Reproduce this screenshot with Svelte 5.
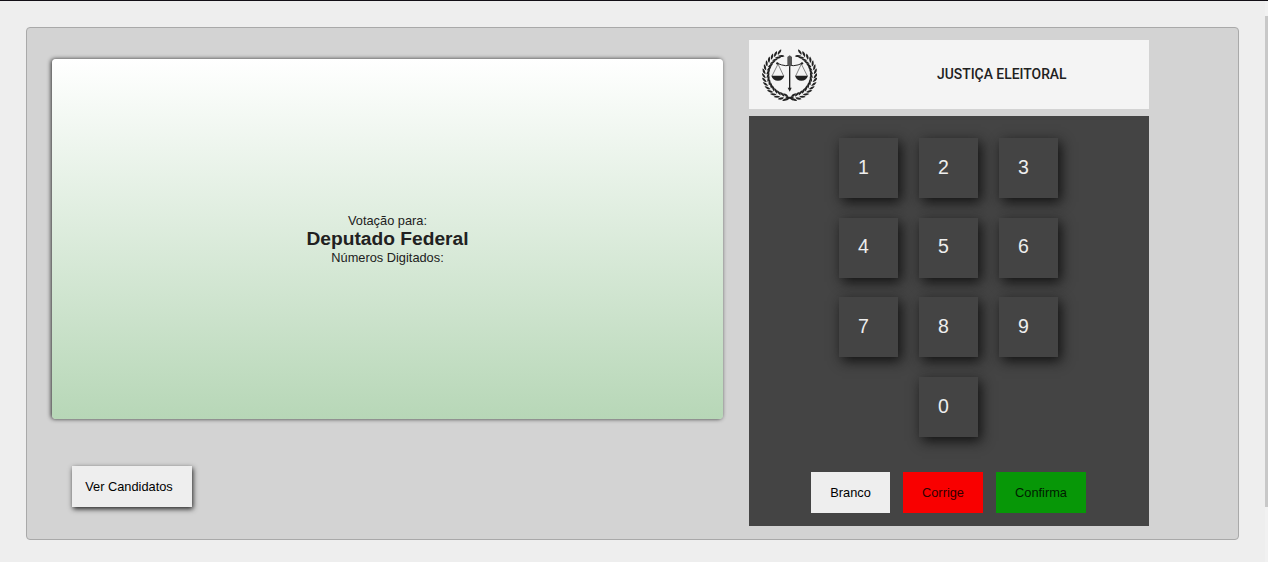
<script>
  const rows = [[1, 2, 3], [4, 5, 6], [7, 8, 9], [0]];
  let digits = $state('');

  // Leaf pairs along the left branch; the right branch mirrors them.
  const leaves = Array.from({ length: 16 }, (_, i) => {
    const angle = 187 + i * 9.8;
    const rad = (angle * Math.PI) / 180;
    return {
      x: 104 + Math.sin(rad) * 71,
      y: 105 - Math.cos(rad) * 68,
      turn: angle
    };
  });
</script>

<div class="page">
  <main class="urna">
    <section class="left">
      <div class="screen">
        <span>Votação para:</span>
        <strong>Deputado Federal</strong>
        <span>Números Digitados: {digits}</span>
      </div>
      <button class="candidates">Ver Candidatos</button>
    </section>
    <section class="right">
      <header>
        <svg class="crest" viewBox="21 27 165 156" width="55" height="52" aria-hidden="true">
          {#each [false, true] as mirrored}
            <g transform={mirrored ? 'translate(208 0) scale(-1 1)' : ''}>
              <path d="M114 180Q106 171 92 171" fill="none" stroke="#222" stroke-width="4" />
              {#each leaves as leaf}
                <g transform="translate({leaf.x} {leaf.y}) rotate({leaf.turn})">
                  <path d="M-4 -1Q-3 -11 12 -12Q11 -4 -4 -1Z" />
                  <path d="M-4 1Q-3 11 12 11Q11 4 -4 1Z" />
                </g>
              {/each}
            </g>
          {/each}
          <g fill="none" stroke="#222" stroke-width="2">
            <path d="M104 52V148" stroke-width="4" />
            <path d="M67 70 Q80 76 92 77 Q104 75 116 77 Q130 76 141 70" stroke-width="3" />
            <path d="M69 72L51 108M69 72L86 108M139 72L122 108M139 72L157 108" stroke-width="1.6" />
          </g>
          <path d="M97 51L104 46L111 51V76L104 80L97 76Z" fill="#555" />
          <path d="M98 143H110L104 155Z" />
          <path d="M49 107H88Q83 122 69 122Q54 122 49 107ZM120 107H159Q154 122 139 122Q125 122 120 107Z" />
          <circle cx="67" cy="70" r="3.5" /><circle cx="141" cy="70" r="3.5" />
        </svg>
        <h1>JUSTIÇA ELEITORAL</h1>
      </header>
      <div class="pad">
        <div class="keys">
          {#each rows as row}
            <div class="row">
              {#each row as n}
                <button class="key" onclick={() => (digits += n)}>{n}</button>
              {/each}
            </div>
          {/each}
        </div>
        <div class="actions">
          <button class="branco">Branco</button>
          <button class="corrige" onclick={() => (digits = '')}>Corrige</button>
          <button class="confirma">Confirma</button>
        </div>
      </div>
    </section>
  </main>
  <div class="track"><div class="thumb"></div></div>
</div>

<style>
  :global(body) { background: #eee; overflow: hidden; }
  * { box-sizing: border-box; }
  .page {
    display: flex;
    justify-content: space-between;
    height: 562px;
    padding-left: 26px;
    border-top: 1px solid #130f16;
    background: #eee;
    color: #212121;
    font-family: "Liberation Sans", Arial, sans-serif;
    font-size: 12.8px;
  }
  button { border: 0; padding: 0; font: inherit; color: #000; }
  .urna {
    display: flex;
    gap: 26px;
    width: 1213px;
    height: 513px;
    margin-top: 26px;
    padding: 12px 0 0 25px;
    border: 1px solid #a9a9a9;
    border-radius: 4px;
    background: #d3d3d3;
  }
  .left { width: 671px; padding-top: 19px; }
  .screen {
    display: flex;
    flex-direction: column;
    align-items: center;
    justify-content: center;
    height: 360px;
    border-radius: 4px;
    background: linear-gradient(#fff, #b7d7b7);
    box-shadow: -1px 0 4px #333;
    line-height: 18px;
  }
  strong { padding-bottom: 2px; font-size: 19.2px; line-height: 17px; }
  .candidates {
    display: block;
    width: 120px;
    height: 41px;
    margin: 47px 0 0 20px;
    padding-right: 6px;
    background: #eee;
    box-shadow: 1px 2px 5px #222;
  }
  .right { width: 400px; }
  header {
    display: flex;
    align-items: center;
    height: 69px;
    margin-bottom: 7px;
    padding-left: 13px;
    background: #f4f4f4;
  }
  .crest { flex: none; fill: #222; }
  h1 {
    margin: 0 0 2px 120px;
    font-family: Roboto, sans-serif;
    font-size: 13.9px;
    font-weight: 500;
    white-space: nowrap;
  }
  .pad { height: 410px; padding-top: 22px; background: #444; }
  .keys {
    display: flex;
    flex-direction: column;
    gap: 19.7px;
    height: 334px;
    padding-right: 1px;
  }
  .row { display: flex; justify-content: center; gap: 21px; }
  .key {
    width: 59px;
    height: 60px;
    padding: 0 10px 1.4px 0;
    background: #444;
    box-shadow: 3px 4px 12px #111;
    color: #eee;
    font-size: 19.5px;
  }
  .actions { display: flex; gap: 13px; padding-left: 62px; }
  .actions button { height: 41px; }
  .branco { width: 79px; background: #eee; }
  .actions .corrige { width: 80px; background: #f90000; color: #310000; }
  .actions .confirma { width: 90px; background: #079707; color: #001c00; }
  .track { width: 3px; padding-top: 15px; background: #f1f1f1; }
  .thumb { height: 491px; background: #c8c8c8; }
</style>
